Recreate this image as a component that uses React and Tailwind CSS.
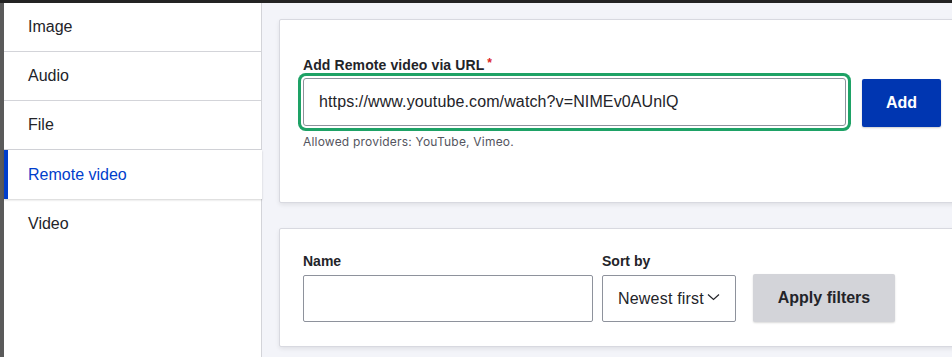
import React from "react";

const font = { fontFamily: "'Liberation Sans', Arial, Helvetica, sans-serif" };

function NavItem({ label, active, last }) {
  if (active) {
    return (
      <div className="relative z-10 flex h-[49px] items-center border-l-4 border-[#003ecc] bg-white pl-[20px] text-[16px] text-[#003ecc] shadow-[0_1px_2px_rgba(0,0,0,0.18)]">
        {label}
      </div>
    );
  }
  return (
    <div
      className={
        "flex h-[49px] items-center border-r border-[#d3d4d9] bg-white pl-[24px] text-[16px] text-[#232429] " +
        (last ? "" : "border-b")
      }
    >
      {label}
    </div>
  );
}

export default function App() {
  return (
    <div className="flex h-[357px] w-[952px] flex-col overflow-hidden bg-[#f3f4f9]" style={font}>
      <div className="h-[3px] w-full shrink-0 bg-[#232323]" />
      <div className="flex min-h-0 flex-1">
        <div className="w-[4px] shrink-0 bg-[#5a5a5a]" />
        <div className="flex w-[258px] shrink-0 flex-col bg-white">
          <NavItem label="Image" />
          <NavItem label="Audio" />
          <div className="flex h-[48px] items-center border-r border-[#d3d4d9] bg-white pl-[24px] text-[16px] text-[#232429]">
            File
          </div>
          <div className="h-px w-full bg-[#d3d4d9]" />
          <NavItem label="Remote video" active />
          <NavItem label="Video" last />
          <div className="flex-1 border-r border-[#d3d4d9] bg-white" />
        </div>
        <div className="min-w-0 flex-1 overflow-hidden pl-[17px] pt-[16px]">
          <div className="h-[184px] w-[720px] rounded-[2px] border border-[#d8d9e0] bg-white px-[23px] pt-[36px] shadow-[0_2px_4px_rgba(0,0,0,0.08)]">
            <div className="flex items-center text-[14px] font-bold leading-[18px] tracking-[0.1px] text-[#232429]">
              Add Remote video via URL
              <span className="ml-[3px] -mt-[5px] text-[12px] font-bold text-[#dc2323]">*</span>
            </div>
            <div className="mt-[4px] flex items-start">
              <div className="flex h-[48px] w-[543px] items-center rounded-[3px] border border-[#8e929c] bg-white pl-[15px] text-[16px] tracking-[0.12px] text-[#232429] shadow-[0_0_0_2px_#ffffff,0_0_0_5px_#1ea266]">
                https://www.youtube.com/watch?v=NIMEv0AUnlQ
              </div>
              <div className="ml-[16px] mt-px flex h-[48px] w-[79px] items-center justify-center rounded-[2px] bg-[#0036b1] text-[16px] font-bold text-white shadow-[0_1px_2px_rgba(0,0,0,0.2)]">
                Add
              </div>
            </div>
            <div
              className="mt-[7px] text-[12px] leading-[15px] tracking-[0.2px] text-[#545560]"
              style={{ fontFamily: "Inter, 'Liberation Sans', sans-serif" }}
            >
              Allowed providers: YouTube, Vimeo.
            </div>
          </div>
          <div className="mt-[25px] h-[119px] w-[720px] rounded-[2px] border border-[#d8d9e0] bg-white px-[23px] pt-[23px] shadow-[0_2px_4px_rgba(0,0,0,0.08)]">
            <div className="flex items-end">
              <div className="flex flex-col">
                <div className="text-[14px] font-bold leading-[18px] text-[#232429]">Name</div>
                <div className="mt-[5px] h-[47px] w-[290px] rounded-[2px] border border-[#8e929c] bg-white" />
              </div>
              <div className="ml-[9px] flex flex-col">
                <div className="text-[14px] font-bold leading-[18px] text-[#232429]">Sort by</div>
                <div className="mt-[5px] flex h-[47px] w-[134px] items-center rounded-[2px] border border-[#8e929c] bg-white pl-[15px] text-[16px] tracking-[0.2px] text-[#232429]">
                  Newest first
                  <svg className="ml-[3px] mt-[-3px]" width="13" height="8" viewBox="0 0 13 8" fill="none">
                    <path d="M1 1.5L6.5 6.5L12 1.5" stroke="#232429" strokeWidth="1.2" />
                  </svg>
                </div>
              </div>
              <div className="ml-[17px] flex h-[48px] w-[142px] items-center justify-center rounded-[2px] bg-[#d3d4d9] text-[16px] font-bold text-[#232429] shadow-[0_1px_2px_rgba(0,0,0,0.15)]">
                Apply filters
              </div>
            </div>
          </div>
        </div>
      </div>
    </div>
  );
}
